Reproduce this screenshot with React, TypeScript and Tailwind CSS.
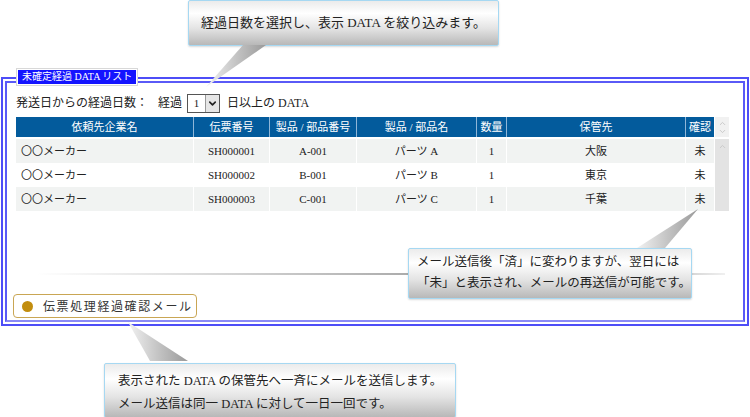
import { ChevronDown, ChevronUp } from "lucide-react";

const font = { fontFamily: '"Liberation Serif", "Noto Sans CJK JP", serif' };

// column widths, header labels
const cols = [
  { w: "w-[177px]", label: "依頼先企業名", align: "justify-start pl-[5px]" },
  { w: "w-[75px]", label: "伝票番号", align: "justify-center" },
  { w: "w-[86px]", label: "製品 / 部品番号", align: "justify-center" },
  { w: "w-[119px]", label: "製品 / 部品名", align: "justify-center" },
  { w: "w-[29px]", label: "数量", align: "justify-center" },
  { w: "w-[178px]", label: "保管先", align: "justify-center" },
  { w: "w-[28px]", label: "確認", align: "justify-center" },
];

const rows = [
  ["〇〇メーカー", "SH000001", "A-001", "パーツ A", "1", "大阪", "未"],
  ["〇〇メーカー", "SH000002", "B-001", "パーツ B", "1", "東京", "未"],
  ["〇〇メーカー", "SH000003", "C-001", "パーツ C", "1", "千葉", "未"],
];

const bubble =
  "border border-[#a6d8f2] rounded-[2px] bg-[linear-gradient(to_bottom,#ebebeb_0%,#ffffff_28%,#e4e4e4_62%,#b8b8b8_100%)] shadow-[0_1px_2px_rgba(0,0,0,0.15)] text-[#222] whitespace-nowrap";

const App = () => {
  return (
    <div
      className="relative w-[750px] h-[417px] bg-white overflow-hidden text-[#222]"
      style={font}
    >
      {/* top callout */}
      <div className={`ml-[188px] w-[311px] h-[46px] flex items-center justify-center text-[13px] ${bubble}`}>
        経過日数を選択し、表示 DATA を絞り込みます。
      </div>

      {/* main frame */}
      <div className="relative mt-[31px] ml-[1px] w-[748px] border-2 border-[#4d4df7] p-[2px]">
        <div className="border-2 border-[#5a5af7] border-b-[#8a8af5] pl-[9px] pr-[4px] pt-[10px] pb-[1px]">
          {/* filter row */}
          <div className="flex items-center h-[20px] text-[12px]">
            <span>発送日からの経過日数：</span>
            <span className="ml-[10px]">経過</span>
            <div className="ml-[5px] flex h-[19px] w-[33px] border border-[#555] bg-white">
              <div className="flex-1 flex items-center justify-center text-[11px]">1</div>
              <div className="w-[14px] border-l border-[#999] bg-[#e6e6e6] flex items-center justify-center">
                <ChevronDown size={11} strokeWidth={3.5} className="text-[#222]" />
              </div>
            </div>
            <span className="ml-[7px]">日以上の DATA</span>
          </div>

          {/* table */}
          <div className="mt-[4px] flex">
            <div className="w-[698px] text-[11px]">
              <div className="flex gap-[1px] h-[20px] bg-[#8fb6d8]">
                {cols.map((c) => (
                  <div
                    key={c.label}
                    className={`${c.w} bg-[#035b9c] text-white flex items-center justify-center`}
                  >
                    {c.label}
                  </div>
                ))}
              </div>
              <div className="mt-[2px]">
                {rows.map((r, i) => (
                  <div key={i} className="flex gap-[1px] h-[24px]">
                    {r.map((v, j) => (
                      <div
                        key={j}
                        className={`${cols[j].w} ${cols[j].align} flex items-center ${
                          i % 2 === 0 ? "bg-[#f1f3f2]" : "bg-white"
                        }`}
                      >
                        {v}
                      </div>
                    ))}
                  </div>
                ))}
              </div>
            </div>
            {/* scrollbar */}
            <div className="w-[14px] ml-[1px] flex flex-col">
              <div className="h-[20px] bg-[#f1f1f1] flex flex-col items-center justify-center text-[#c8c8c8]">
                <ChevronUp size={9} strokeWidth={2.5} className="-mb-[1px]" />
                <ChevronDown size={9} strokeWidth={2.5} />
              </div>
              <div className="mt-[2px] h-[72px] bg-[#e3e3e3] flex justify-center text-[#c8c8c8] pt-[3px]">
                <ChevronUp size={9} strokeWidth={2.5} />
              </div>
            </div>
          </div>

          {/* divider */}
          <div className="mt-[62px] ml-[20px] mr-[14px] h-[2px] bg-[linear-gradient(to_right,rgba(180,180,180,0)_0%,#aaaaaa_55%,#b0b0b0_88%,rgba(230,230,230,0.6)_100%)]" />

          {/* mail button */}
          <div className="mt-[19px] mb-[1px] ml-[-3px] w-[184px] h-[24px] border border-[#c9a654] rounded-[4px] bg-white flex items-center pl-[8px]">
            <span className="w-[11px] h-[11px] rounded-full bg-[#c28d0e]" />
            <span className="ml-[10px] text-[12px] tracking-[1.6px] text-[#333]" style={{ fontFamily: '"Noto Sans CJK JP", sans-serif' }}>
              伝票処理経過確認メール
            </span>
          </div>
        </div>

        {/* title tab */}
        <div className="absolute left-[13px] top-[-11px] border border-[#d8d8d8] bg-white p-[1px]">
          <div className="bg-[#1414ff] text-white text-[10px] h-[14px] leading-[14px] px-[4px]">
            未確定経過 DATA リスト
          </div>
        </div>
      </div>

      {/* bottom callout */}
      <div className={`mt-[37px] ml-[104px] w-[352px] h-[55px] pl-[13px] pt-[6px] text-[12.5px] leading-[23px] ${bubble}`}>
        <div>表示された DATA の保管先へ一斉にメールを送信します。</div>
        <div>メール送信は同一 DATA に対して一日一回です。</div>
      </div>

      {/* pointers */}
      <svg className="absolute left-0 top-0 pointer-events-none z-10" width="750" height="417">
        <defs>
          <linearGradient id="ptr" x1="0" y1="0" x2="1" y2="0">
            <stop offset="0" stopColor="#f2f2f2" />
            <stop offset="0.5" stopColor="#c4c4c4" />
            <stop offset="1" stopColor="#9a9a9a" />
          </linearGradient>
        </defs>
        <polygon points="243,45 266,45 206,87" fill="url(#ptr)" />
        <polygon points="637,248 665,248 698,209" fill="url(#ptr)" />
        <polygon points="128,322 150,361 188,361" fill="url(#ptr)" />
      </svg>

      {/* right callout */}
      <div className={`absolute left-[408px] top-[248px] z-20 w-[284px] h-[51px] pl-[8px] pt-[3px] text-[12.5px] leading-[21px] ${bubble}`}>
        <div>メール送信後「済」に変わりますが、翌日には</div>
        <div>「未」と表示され、メールの再送信が可能です。</div>
      </div>
    </div>
  );
};

export default App;
